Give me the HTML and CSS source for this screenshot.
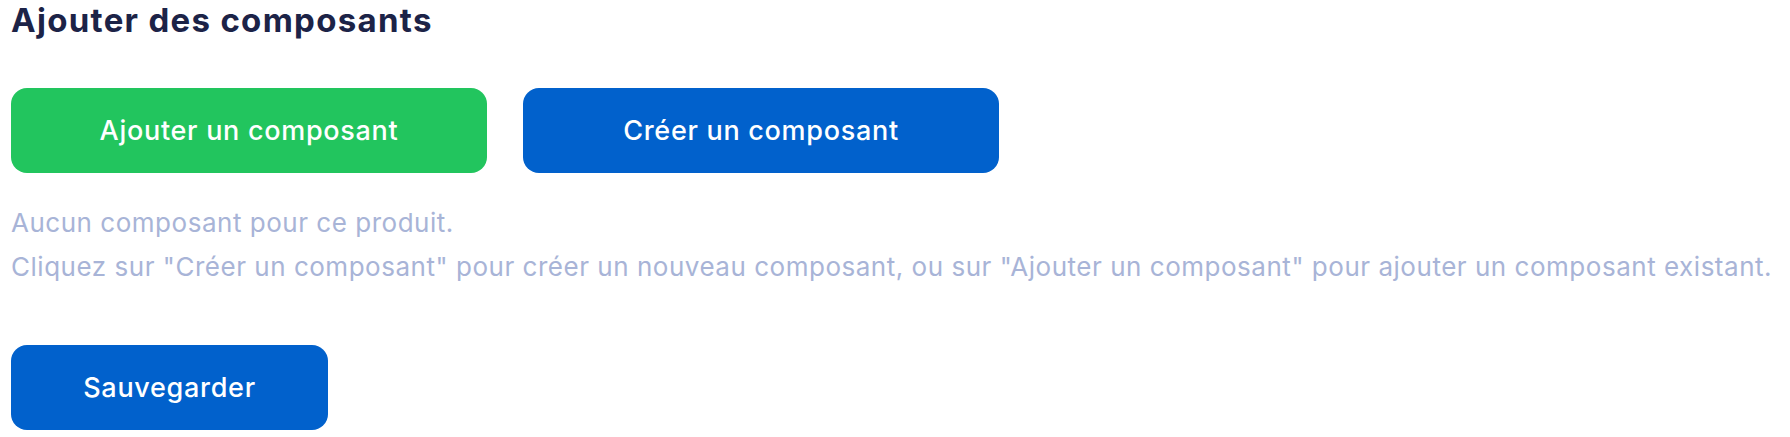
FILE: index.html
```html
<!doctype html>
<html lang="fr">
  <head>
    <title>Ajouter des composants</title>
    <meta charset="UTF-8" />
    <link rel="stylesheet" href="styles.css">
  </head>

  <body>
    <section class="components">
      <h2 class="title">Ajouter des composants</h2>

      <div class="actions">
        <button class="btn btn-green">Ajouter un composant</button>
        <button class="btn btn-blue">Créer un composant</button>
      </div>

      <p class="empty">
        Aucun composant pour ce produit.<br />
        Cliquez sur "Créer un composant" pour créer un nouveau composant, ou sur "Ajouter un composant" pour ajouter un composant existant.
      </p>

      <button class="btn btn-blue btn-save">Sauvegarder</button>
    </section>
  </body>
</html>
```

FILE: styles.css
```css
html {
  margin: 0;
  padding: 0;
}
body {
  margin: 0;
  padding: 0 11px;
  font-family: Inter, 'Noto Sans', sans-serif;
  background: #ffffff;
  -webkit-font-smoothing: antialiased;
}
.title {
  margin: 0;
  font-size: 33px;
  line-height: 40px;
  font-weight: 700;
  letter-spacing: 1.3px;
  color: #1c2347;
}
.actions {
  display: flex;
  gap: 36px;
  margin-top: 48px;
}
.btn {
  font-family: inherit;
  font-size: 27px;
  font-weight: 500;
  letter-spacing: 0.7px;
  color: #ffffff;
  border: 0;
  border-radius: 16px;
  height: 85px;
  width: 476px;
  cursor: pointer;
}
.btn-green {
  background-color: #22c55e;
}
.btn-blue {
  background-color: #0161cc;
}
.empty {
  margin: 28px 0 0 0;
  font-size: 26px;
  line-height: 44px;
  letter-spacing: 0.52px;
  color: #a8b4d7;
}
.btn-save {
  display: block;
  margin-top: 56px;
  width: 317px;
}
```
